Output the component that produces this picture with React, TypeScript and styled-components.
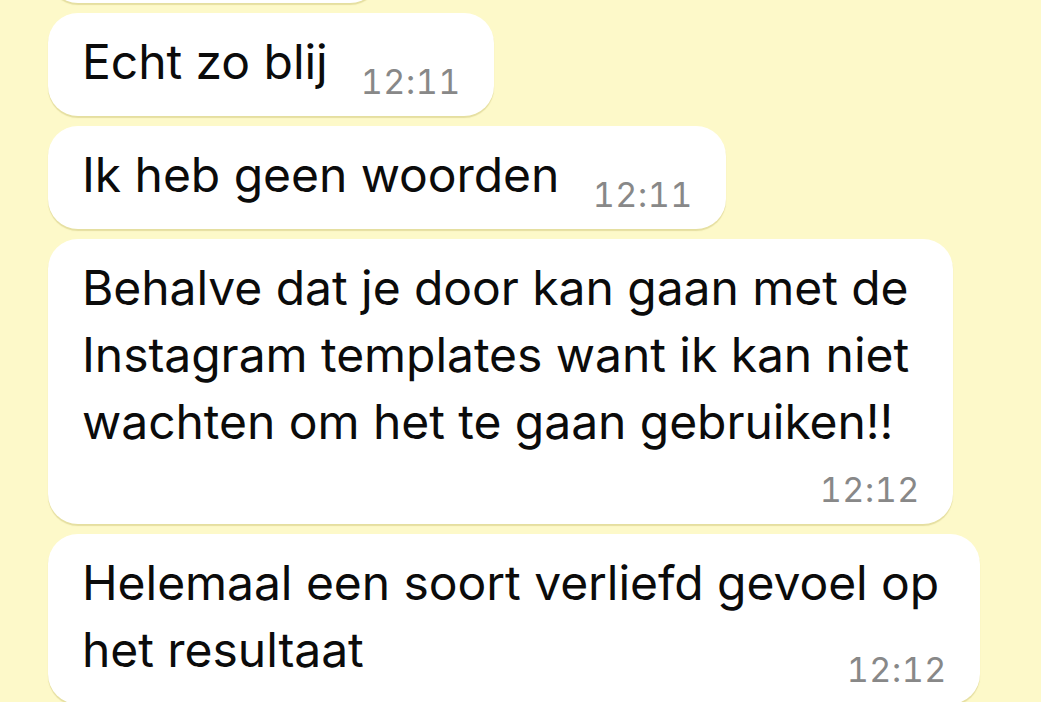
import React from "react";
import styled, { createGlobalStyle } from "styled-components";

const GlobalStyle = createGlobalStyle`
  html, body {
    margin: 0;
    padding: 0;
    background: #fdf9c9;
    overflow: hidden;
  }
  body {
    font-family: Inter, "Noto Sans", "Liberation Sans", sans-serif;
    -webkit-font-smoothing: antialiased;
  }
`;

export const Screen = styled.div`
  width: 1041px;
  height: 702px;
  overflow: hidden;
  background: #fdf9c9;
`;

export const Thread = styled.div`
  display: flex;
  flex-direction: column;
  align-items: flex-start;
  gap: 10px;
  padding-left: 48px;
  margin-top: -87px;
`;

export const Bubble = styled.div<{ $width: number; $height?: number }>`
  box-sizing: border-box;
  display: flex;
  flex-direction: column;
  width: ${(p) => p.$width}px;
  ${(p) => (p.$height ? `height: ${p.$height}px;` : "")}
  padding: 15px 33px 18px 34px;
  background: #ffffff;
  border-radius: 30px;
  box-shadow: 0 2px 1px rgba(200, 190, 110, 0.45);
`;

export const Line = styled.div`
  font-size: 48px;
  line-height: 67px;
  letter-spacing: -0.05px;
  color: #0b0b0b;
  white-space: nowrap;
`;

export const Time = styled.div<{ $overlap?: boolean }>`
  align-self: flex-end;
  font-size: 34px;
  line-height: 33px;
  letter-spacing: 0.6px;
  font-variant-numeric: tabular-nums;
  color: #888888;
  margin-top: ${(p) => (p.$overlap ? "-30px" : "18px")};
  white-space: nowrap;
`;

type Message = {
  lines: string[];
  time: string;
  width: number;
  overlap: boolean;
};

const messages: Message[] = [
  { lines: ["Echt zo blij"], time: "12:11", width: 446, overlap: true },
  { lines: ["Ik heb geen woorden"], time: "12:11", width: 678, overlap: true },
  {
    lines: [
      "Behalve dat je door kan gaan met de",
      "Instagram templates want ik kan niet",
      "wachten om het te gaan gebruiken!!",
    ],
    time: "12:12",
    width: 905,
    overlap: false,
  },
  {
    lines: ["Helemaal een soort verliefd gevoel op", "het resultaat"],
    time: "12:12",
    width: 932,
    overlap: true,
  },
];

export default function App() {
  return (
    <Screen>
      <GlobalStyle />
      <Thread>
        <Bubble $width={332} $height={90} />
        {messages.map((m, i) => (
          <Bubble key={i} $width={m.width}>
            {m.lines.map((l) => (
              <Line key={l}>{l}</Line>
            ))}
            <Time $overlap={m.overlap}>{m.time}</Time>
          </Bubble>
        ))}
      </Thread>
    </Screen>
  );
}
